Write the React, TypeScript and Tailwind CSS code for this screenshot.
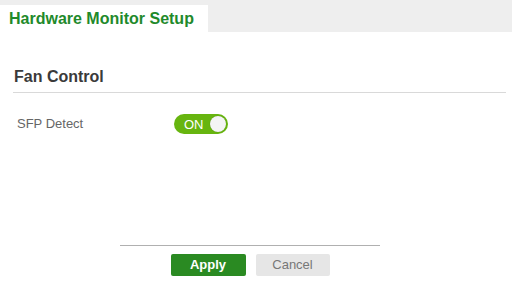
import React from "react";

const font = { fontFamily: '"Liberation Sans", Arial, sans-serif' };

// ─── Toggle ──────────────────────────────────────────────────────────────────
const Toggle = ({ on }: { on: boolean }) => (
  <div className="flex h-[20px] w-[54px] items-center justify-between rounded-full bg-[#67b50f] pl-[10px] pr-[2px]">
    <span className="text-[13px] leading-none text-white">{on ? "ON" : "OFF"}</span>
    <span className="h-[16px] w-[16px] rounded-full bg-[#f4f4f4] shadow-[0_0_1px_rgba(0,0,0,0.3)]" />
  </div>
);

export default function App() {
  return (
    <div className="flex h-[284px] w-[512px] flex-col bg-white" style={font}>
      {/* Tab bar */}
      <div className="flex h-[32px] items-end bg-[#eeeeee]">
        <div className="flex h-[27px] w-[208px] items-center bg-white pl-[9px]">
          <span className="text-[16px] font-bold text-[#1f8a2b]">Hardware Monitor Setup</span>
        </div>
      </div>

      {/* Fan Control */}
      <div className="ml-[13px] mr-[6px] mt-[36px] border-b border-[#d9d9d9] pb-[6px] pl-[1px]">
        <h2 className="text-[16px] font-bold leading-[18px] text-[#3a3a3a]">Fan Control</h2>
      </div>

      <div className="mt-[21px] flex items-center pl-[17px]">
        <span className="w-[157px] text-[13px] text-[#666]">SFP Detect</span>
        <Toggle on />
      </div>

      {/* Footer */}
      <div className="mt-auto mb-[8px] flex w-[500px] flex-col items-center">
        <div className="h-px w-[260px] bg-[#b0b0b0]" />
        <div className="mt-[8px] flex gap-[10px]">
          <button className="h-[22px] w-[75px] rounded-[2px] bg-[#2a8a22] text-[13px] font-bold text-white">
            Apply
          </button>
          <button className="h-[22px] w-[74px] rounded-[2px] bg-[#e6e6e6] text-[13px] text-[#777]">
            Cancel
          </button>
        </div>
      </div>
    </div>
  );
}
